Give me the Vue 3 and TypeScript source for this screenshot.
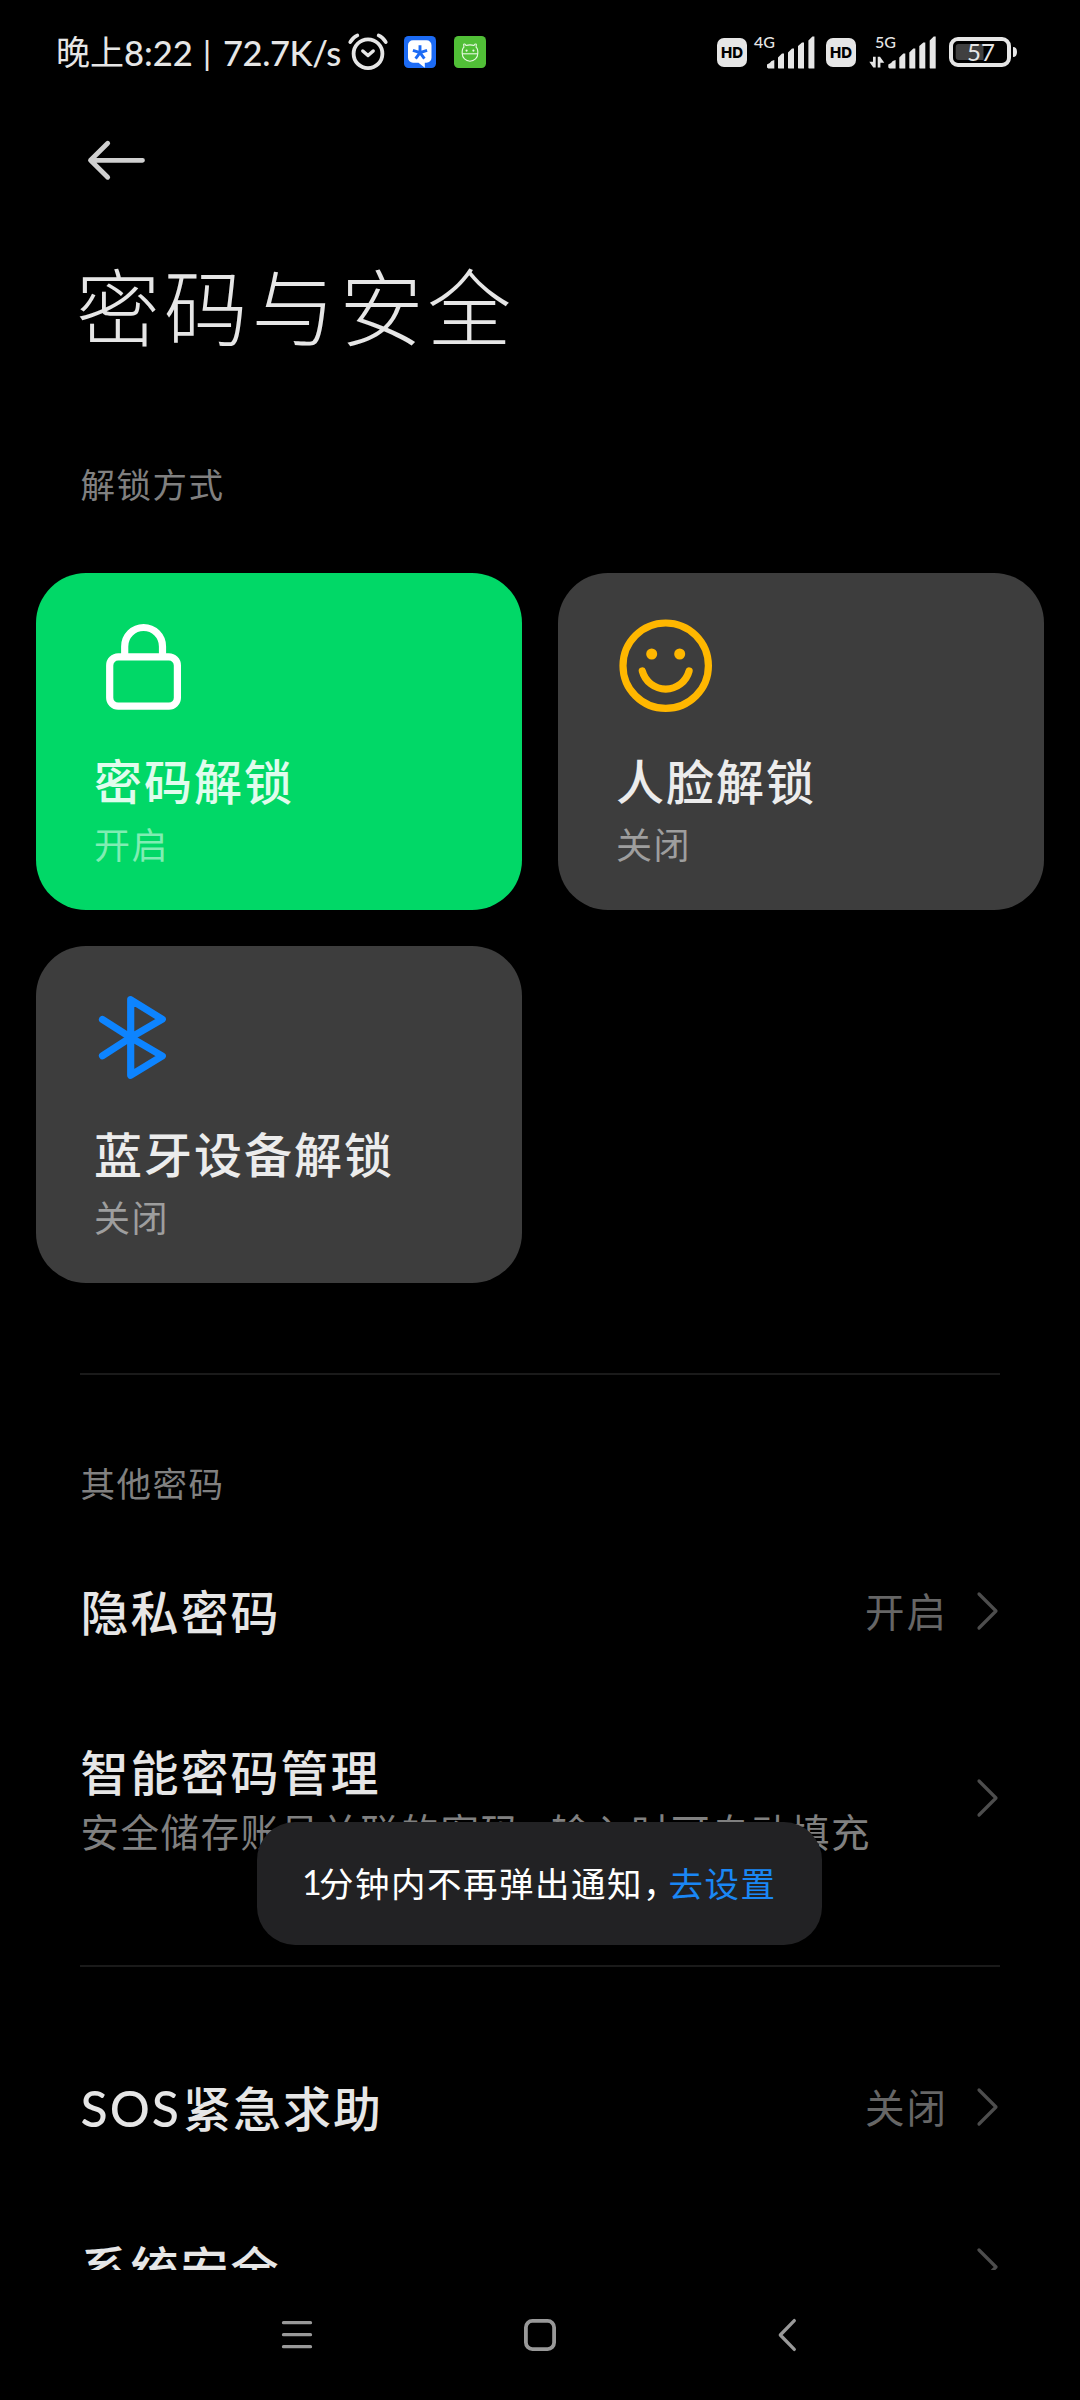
<script setup lang="ts">
interface UnlockCard {
  icon: 'lock' | 'face' | 'bluetooth'
  title: string
  state: string
  active: boolean
}

interface Row {
  latin?: string
  title: string
  summary?: [string, string]
  value?: string
}

const cards: UnlockCard[] = [
  { icon: 'lock', title: '密码解锁', state: '开启', active: true },
  { icon: 'face', title: '人脸解锁', state: '关闭', active: false },
  { icon: 'bluetooth', title: '蓝牙设备解锁', state: '关闭', active: false },
]

const passwordRows: Row[] = [
  { title: '隐私密码', value: '开启' },
  { title: '智能密码管理', summary: ['安全储存账号关联的密码', '输入时可自动填充'] },
]

const safetyRows: Row[] = [
  { latin: 'SOS', title: '紧急求助', value: '关闭' },
  { title: '系统安全' },
]

const groups: Row[][] = [passwordRows, safetyRows]
</script>

<template>
  <div class="screen">
    <header class="status">
      <div class="status-left">
        <span class="cjk">晚上</span><span class="clock">8:22</span><span class="bar">|</span><span class="speed">72.7K/s</span>
        <svg class="alarm" width="42" height="40" viewBox="0 0 42 40" fill="none" stroke="#e6e6e6" stroke-linecap="round" stroke-linejoin="round">
          <circle cx="21" cy="21.7" r="14.4" stroke-width="3.8" />
          <path d="M15.8 19 21 23.6 26.2 19" stroke-width="3.4" />
          <path d="M3.2 10.2Q5.8 5.4 10.4 3.4M38.8 10.2Q36.2 5.4 31.6 3.4" stroke-width="3.6" />
        </svg>
        <svg class="app-blue" width="32" height="32" viewBox="0 0 32 32">
          <rect width="32" height="32" rx="4.5" fill="#1c6bf5" />
          <path d="M9 4.3h13.5a5 5 0 0 1 5 5v12.4a5 5 0 0 1-5 5h-1.7v5L14.5 26.7H9a5 5 0 0 1-5-5V9.3a5 5 0 0 1 5-5z" fill="#fff" />
          <path d="M16 16.7V9.2M16 16.7 8.9 14.4M16 16.7l7.1-2.3M16 16.7l-4.4 6M16 16.7l4.4 6" stroke="#1c6bf5" stroke-width="2.9" />
        </svg>
        <svg class="app-green" width="32" height="32" viewBox="0 0 32 32">
          <rect width="32" height="32" rx="4.5" fill="#51bf37" />
          <g fill="none" stroke="#e9f8e4" stroke-width="1.1" stroke-linejoin="round">
            <path d="M8.2 17.6C8 14 8.8 12 9.9 11.2L9.7 8.2Q11.3 7.4 12 9.5Q16 8.3 20 9.5Q20.7 7.4 22.3 8.2L22.1 11.2C23.2 12 24 14 23.8 17.6A7.8 7.6 0 0 1 8.2 17.6Z" />
            <path d="M8.2 17.8h15.6" />
          </g>
          <circle cx="12.6" cy="14.6" r="1.1" fill="#e9f8e4" />
          <circle cx="19.4" cy="14.6" r="1.1" fill="#e9f8e4" />
        </svg>
      </div>
      <div class="status-right">
        <span class="hd">HD</span>
        <svg class="signal" width="62" height="36" viewBox="0 0 62 36" fill="#e6e6e6">
          <text x="0" y="13.5" class="net">4G</text>
          <path d="M13 33.5v-3q3-1 4.5-3.5l2.8-1v8.5h-6z" />
          <path d="M24 34v-10.5l4-4h2v15h-5.5zM34 34V18.5l4-4h2V34.5h-5.5zM44 34V12l4-3.5h2v26h-5.5zM54.4 34V6.5l4-4h2v32h-5.5z" />
        </svg>
        <span class="hd second">HD</span>
        <svg class="signal five" width="70" height="36" viewBox="0 0 70 36" fill="#e6e6e6">
          <text x="7" y="13.5" class="net">5G</text>
          <path d="M7.7 22.8H5v5H1.3L5.3 33.5h2.4z" />
          <path d="M9.7 33.5V22.8h2.3l4.3 5.9H12.4v4.8z" />
          <path d="M20.3 33.5v-3q3-1 4.5-3.5l2.8-1v8.5h-6z" />
          <path d="M31.3 34v-10.5l4-4h2v15h-5.5zM41.3 34V18.5l4-4h2V34.5h-5.5zM51.3 34V12l4-3.5h2v26h-5.5zM61.7 34V6.5l4-4h2v32h-5.5z" />
        </svg>
        <svg class="battery" width="70" height="32" viewBox="0 0 70 32">
          <rect x="2" y="3" width="58" height="26" rx="7" fill="none" stroke="#e6e6e6" stroke-width="4" />
          <path d="M9.7 8H34.5V24H9.7a3 3 0 0 1-3-3V11a3 3 0 0 1 3-3z" fill="#404040" />
          <path d="M64 11q4 0 4 5t-4 5z" fill="#e6e6e6" />
          <text x="18" y="24.8" class="percent">57</text>
        </svg>
      </div>
    </header>

    <main class="content">
      <div class="toolbar">
        <svg width="60" height="40" viewBox="0 0 60 40" fill="none" stroke="#d0d0d0" stroke-width="4.8" stroke-linecap="round" stroke-linejoin="round">
          <path d="M56.5 20.3H4.5M21.7 3.3 4.5 20.3 21.7 37.3" />
        </svg>
      </div>
      <h1>密码与安全</h1>
      <h2 class="first">解锁方式</h2>

      <section class="cards">
        <article v-for="card in cards" :key="card.title" class="card" :class="{ active: card.active }">
          <svg class="card-icon" width="100" height="110" viewBox="0 0 100 110" fill="none" stroke-width="7.2" stroke-linecap="round" stroke-linejoin="round">
            <g v-if="card.icon === 'lock'" stroke="#fff">
              <rect x="15.7" y="49.9" width="67.7" height="49.3" rx="8.5" />
              <path d="M30.7 49V39.4a18.9 18.9 0 0 1 37.8 0V49" />
            </g>
            <g v-else-if="card.icon === 'face'" stroke="#ffb700">
              <circle cx="49.7" cy="58.7" r="42.7" />
              <path d="M26.3 64a24.2 24.2 0 0 0 46.8 0" />
              <circle cx="35.7" cy="47" r="5.5" fill="#ffb700" stroke="none" />
              <circle cx="63.7" cy="47" r="5.5" fill="#ffb700" stroke="none" />
            </g>
            <path v-else stroke="#0d84ff" d="M8.5 39.5 36.7 57.5 68.3 76 36.7 95.3V19.7L68.3 39.2 36.7 57.5 8.5 75.7" />
          </svg>
          <div class="card-title">{{ card.title }}</div>
          <div class="card-state">{{ card.state }}</div>
        </article>
      </section>

      <template v-for="(group, g) in groups" :key="g">
        <hr :class="{ tight: g > 0 }" />
        <h2 v-if="g === 0">其他密码</h2>
        <div v-for="row in group" :key="row.title" class="row" :class="{ tall: row.summary }">
          <div class="row-text">
            <div class="row-title"><span v-if="row.latin" class="latin">{{ row.latin }}</span>{{ row.title }}</div>
            <div v-if="row.summary" class="row-summary">{{ row.summary[0] }}<span class="comma">，</span>{{ row.summary[1] }}</div>
          </div>
          <span v-if="row.value" class="row-value">{{ row.value }}</span>
          <svg class="chevron" width="24" height="40" viewBox="0 0 24 40" fill="none" stroke="#4d4d4d" stroke-width="3.2" stroke-linecap="round" stroke-linejoin="round">
            <path d="M3 3 20 20 3 37" />
          </svg>
        </div>
      </template>
    </main>

    <div class="toast">
      <span class="one">1</span>分钟内不再弹出通知<span class="comma">，</span><a>去设置</a>
    </div>

    <nav class="navbar">
      <svg width="32" height="34" viewBox="0 0 32 34" stroke="#999" stroke-width="3.3" stroke-linecap="round">
        <path d="M2.5 4.7h27M2.5 16.7h27M2.5 28.7h27" />
      </svg>
      <svg width="34" height="34" viewBox="0 0 34 34" fill="none" stroke="#999" stroke-width="3.8">
        <rect x="2.9" y="2.9" width="28.2" height="28.2" rx="6.5" />
      </svg>
      <svg width="32" height="34" viewBox="0 0 32 34" fill="none" stroke="#999" stroke-width="3.3" stroke-linecap="round" stroke-linejoin="round">
        <path d="M27.3 2.6 13.3 17 27.3 31.4" />
      </svg>
    </nav>
  </div>
</template>

<style>
body {
  background: #000;
}
</style>

<style scoped>
.screen {
  position: relative;
  display: flex;
  flex-direction: column;
  width: 1080px;
  height: 2400px;
  overflow: hidden;
  background: #000;
  color: #e6e6e6;
  font-family: "Noto Sans CJK SC", sans-serif;
  white-space: nowrap;
}

svg {
  display: block;
  flex: none;
  overflow: visible;
}

.status {
  display: flex;
  flex: none;
  justify-content: space-between;
  height: 104px;
  padding: 0 61px 0 56px;
}

.status-left,
.status-right {
  display: flex;
  align-items: center;
  height: 104px;
}

.status-left {
  font-size: 34px;
}

.cjk {
  width: 68px;
  line-height: 40px;
  margin-top: -2px;
}

.clock,
.bar,
.speed {
  font-family: Lato, sans-serif;
  font-size: 34.5px;
  font-weight: 500;
  line-height: 40px;
  margin-top: 1px;
}

.clock {
  width: 79px;
}

.bar {
  width: 20px;
  font-size: 32px;
}

.speed {
  width: 124px;
  letter-spacing: -0.4px;
}

.app-blue {
  margin-left: 15px;
}

.app-green {
  margin-left: 18px;
}

.hd {
  width: 30px;
  height: 29px;
  border-radius: 7px;
  background: #e6e6e6;
  color: #000;
  font: 800 15px/29px Inter, sans-serif;
  text-align: center;
}

.signal {
  margin-left: 7px;
}

.second {
  margin-left: 10px;
}

.five {
  margin-left: 12px;
}

.net {
  font: 500 16px Lato, sans-serif;
}

.percent {
  font: 24px Lato, sans-serif;
  fill: #e6e6e6;
}

.battery {
  margin-left: 11px;
}

.content {
  flex: none;
  height: 2166px;
  overflow: hidden;
}

.toolbar {
  display: flex;
  align-items: center;
  height: 112px;
  padding-left: 86px;
}

h1 {
  margin: 0;
  padding: 1px 0 0 76px;
  font-size: 84px;
  font-weight: 200;
  line-height: 174px;
  letter-spacing: 3.8px;
}

h2 {
  margin: 0;
  padding: 77px 0 19px 80.5px;
  color: #808080;
  font-size: 34.5px;
  font-weight: 400;
  line-height: 60px;
  letter-spacing: 1.5px;
}

h2.first {
  padding: 62px 0 60px 80.5px;
}

.cards {
  display: grid;
  grid-template-columns: 486px 486px;
  gap: 36px;
  padding: 0 36px;
}

.card {
  box-sizing: border-box;
  height: 337px;
  padding: 34px 0 0 58px;
  border-radius: 50px;
  background: #3d3d3d;
}

.card.active {
  background: #01d867;
}

.card-title {
  margin-top: 27px;
  color: #ececec;
  font-size: 48px;
  font-weight: 500;
  line-height: 70px;
  letter-spacing: 2px;
}

.card-state {
  margin-top: 4px;
  color: #9e9e9e;
  font-size: 36px;
  line-height: 50px;
  letter-spacing: 1.5px;
}

.active .card-title {
  color: #e0fced;
}

.active .card-state {
  color: #80edb3;
}

hr {
  height: 2px;
  margin: 90px 80px 0;
  border: 0;
  background: #1a1a1a;
}

hr.tight {
  margin: 60px 80px;
}

.row {
  display: flex;
  align-items: center;
  box-sizing: border-box;
  height: 160px;
  padding: 0 80px 0 80.5px;
}

.row.tall {
  height: 214px;
}

.row-text {
  flex: 1;
  padding-bottom: 2px;
}

.tall .row-text {
  padding: 2px 0 0;
}

.row-title {
  font-size: 48px;
  font-weight: 500;
  line-height: 62px;
  letter-spacing: 2px;
}

.row-summary {
  color: #808080;
  font-size: 38.5px;
  line-height: 58px;
  letter-spacing: 1.5px;
}

.latin {
  margin-right: 2px;
  font-family: Lato, sans-serif;
  font-size: 50px;
  line-height: 0;
}

.row-value {
  margin-right: 28px;
  padding-bottom: 2px;
  color: #666;
  font-size: 39.5px;
  line-height: 60px;
  letter-spacing: 2px;
}

.comma {
  letter-spacing: -8px;
}

.toast {
  position: absolute;
  left: 257px;
  top: 1822px;
  display: flex;
  align-items: center;
  box-sizing: border-box;
  width: 565px;
  height: 123px;
  padding: 0 0 3px 45px;
  border-radius: 38px;
  background: #222224;
  color: #fff;
  font-size: 34.5px;
  line-height: 60px;
  letter-spacing: 1.5px;
}

.toast .comma {
  margin-right: -1px;
}

.toast a {
  color: #1a87f5;
}

.one {
  width: 17px;
  font-family: Lato, sans-serif;
  font-size: 34px;
  letter-spacing: -2px;
}

.navbar {
  display: flex;
  flex: 1;
  align-items: center;
  justify-content: center;
  gap: 210px;
}
</style>
